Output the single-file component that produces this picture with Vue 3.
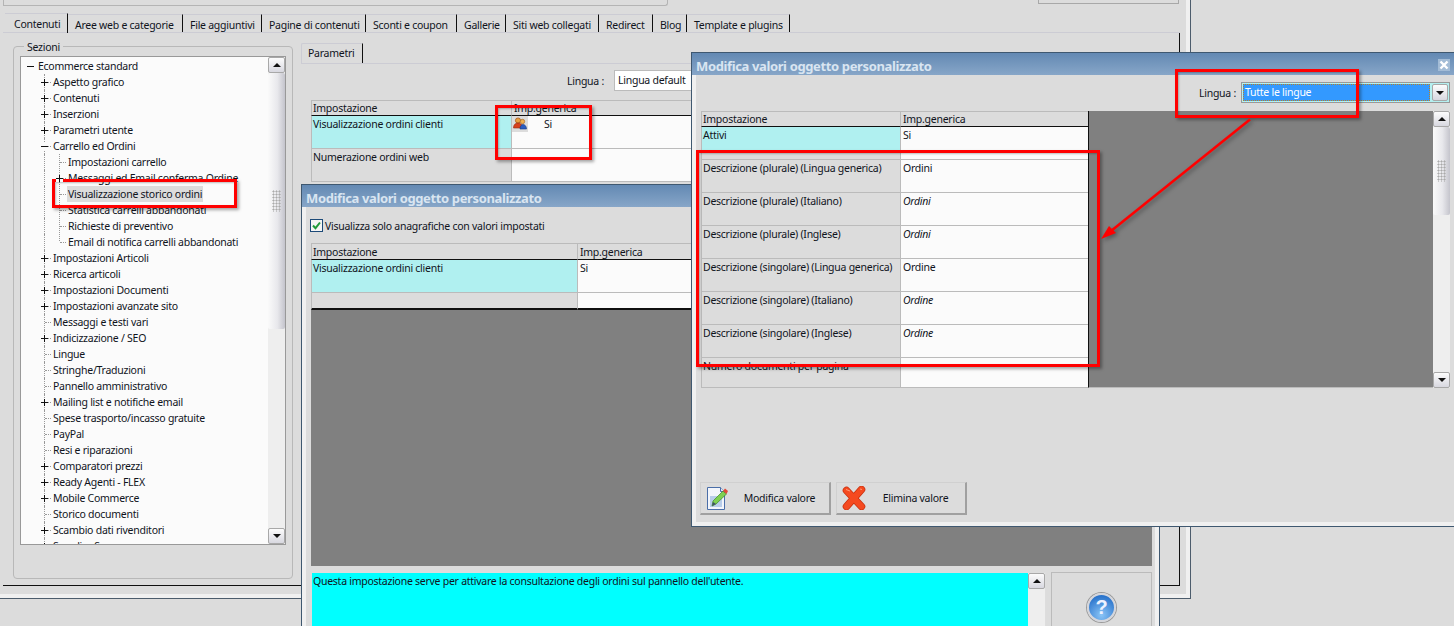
<script setup>
const tabs = [
  { t: 'Contenuti', w: 63, active: true },
  { t: 'Aree web e categorie', w: 115 },
  { t: 'File aggiuntivi', w: 79 },
  { t: 'Pagine di contenuti', w: 104 },
  { t: 'Sconti e coupon', w: 91 },
  { t: 'Gallerie', w: 49 },
  { t: 'Siti web collegati', w: 93 },
  { t: 'Redirect', w: 54 },
  { t: 'Blog', w: 34 },
  { t: 'Template e plugins', w: 103 }
]
const tree = [
  { t: 'Ecommerce standard', l: 0, e: 'm' },
  { t: 'Aspetto grafico', l: 1, e: 'p' },
  { t: 'Contenuti', l: 1, e: 'p' },
  { t: 'Inserzioni', l: 1, e: 'p' },
  { t: 'Parametri utente', l: 1, e: 'p' },
  { t: 'Carrello ed Ordini', l: 1, e: 'm' },
  { t: 'Impostazioni carrello', l: 2 },
  { t: 'Messaggi ed Email conferma Ordine', l: 2, e: 'p' },
  { t: 'Visualizzazione storico ordini', l: 2, sel: true },
  { t: 'Statistica carrelli abbandonati', l: 2 },
  { t: 'Richieste di preventivo', l: 2 },
  { t: 'Email di notifica carrelli abbandonati', l: 2, last: true },
  { t: 'Impostazioni Articoli', l: 1, e: 'p' },
  { t: 'Ricerca articoli', l: 1, e: 'p' },
  { t: 'Impostazioni Documenti', l: 1, e: 'p' },
  { t: 'Impostazioni avanzate sito', l: 1, e: 'p' },
  { t: 'Messaggi e testi vari', l: 1 },
  { t: 'Indicizzazione / SEO', l: 1, e: 'p' },
  { t: 'Lingue', l: 1 },
  { t: 'Stringhe/Traduzioni', l: 1 },
  { t: 'Pannello amministrativo', l: 1 },
  { t: 'Mailing list e notifiche email', l: 1, e: 'p' },
  { t: 'Spese trasporto/incasso gratuite', l: 1 },
  { t: 'PayPal', l: 1 },
  { t: 'Resi e riparazioni', l: 1 },
  { t: 'Comparatori prezzi', l: 1, e: 'p' },
  { t: 'Ready Agenti - FLEX', l: 1, e: 'p' },
  { t: 'Mobile Commerce', l: 1, e: 'p' },
  { t: 'Storico documenti', l: 1 },
  { t: 'Scambio dati rivenditori', l: 1, e: 'p' },
  { t: 'Supplier S', l: 1, e: 'p' }
]
const rows3 = [
  { a: 'Attivi', b: 'Si', on: true },
  { a: 'Descrizione (plurale) (Lingua generica)', b: 'Ordini' },
  { a: 'Descrizione (plurale) (Italiano)', b: 'Ordini', i: true },
  { a: 'Descrizione (plurale) (Inglese)', b: 'Ordini', i: true },
  { a: 'Descrizione (singolare) (Lingua generica)', b: 'Ordine' },
  { a: 'Descrizione (singolare) (Italiano)', b: 'Ordine', i: true },
  { a: 'Descrizione (singolare) (Inglese)', b: 'Ordine', i: true },
  { a: 'Numero documenti per pagina', b: '', short: true }
]
</script>

<template>
  <div class="desk">
    <div class="main">
      <div class="topbar">
        <div class="topfield"></div>
        <div class="topbtn"></div>
      </div>
      <div class="tabs">
        <div v-for="t in tabs" :key="t.t" class="tab" :class="{ active: t.active }" :style="{ width: t.w + 'px' }">{{ t.t }}</div>
      </div>
      <div class="tabbody">
        <div class="content">
          <fieldset class="group">
            <legend>Sezioni</legend>
            <div class="tree">
              <div class="treelist">
                <div v-for="r in tree" :key="r.t" class="node" :class="['lv' + r.l, { last: r.last }]">
                  <i v-if="r.e" class="exp" :class="r.e"></i>
                  <span class="label" :class="{ sel: r.sel }">{{ r.t }}</span>
                </div>
              </div>
              <div class="sb">
                <div class="sbtn"><b class="up"></b></div>
                <div class="thumb"><span class="grip"></span></div>
                <div class="track"></div>
                <div class="sbtn"><b class="down"></b></div>
              </div>
            </div>
          </fieldset>
          <div class="right">
            <div class="subtabs"><div class="subtab">Parametri</div></div>
            <div class="langrow">
              <span>Lingua :</span>
              <div class="combo">Lingua default</div>
            </div>
            <div class="table t1">
              <div class="hd">Impostazione</div><div class="hd">Imp.generica</div>
              <div class="c1 on">Visualizzazione ordini clienti</div>
              <div class="c2 si">
                <span class="usercell">
                  <svg width="16" height="16" viewBox="0 0 16 16">
                    <circle cx="6" cy="4.5" r="2.6" fill="#e8a040" stroke="#a04a10" stroke-width=".7"/>
                    <path d="M1.500 12c0-3.500 2-5 4.500-5s4.500 1.500 4.500 5z" fill="#d8401c" stroke="#902a10" stroke-width=".6"/>
                    <circle cx="10.500" cy="5.500" r="2.200" fill="#f0b050" stroke="#a06018" stroke-width=".6"/>
                    <path d="M8 13c0-3 1.300-4.500 3-4.500s3.500 1.500 3.500 4.500z" fill="#2a5cc0" stroke="#1a3a80" stroke-width=".6"/>
                  </svg>
                </span>
                <span>Si</span>
              </div>
              <div class="c1">Numerazione ordini web</div>
              <div class="c2"></div>
            </div>
          </div>
        </div>
      </div>
    </div>

    <div class="win win2">
      <div class="title">Modifica valori oggetto personalizzato</div>
      <div class="winbody">
        <label class="check">
          <svg width="13" height="13" viewBox="0 0 13 13">
            <rect x=".5" y=".5" width="12" height="12" fill="#f4f4f4" stroke="#1c4a78"/>
            <path d="M3 6.500l2.500 2.700L10 3.500" fill="none" stroke="#1f9a3a" stroke-width="2"/>
          </svg>
          <span>Visualizza solo anagrafiche con valori impostati</span>
        </label>
        <div class="table t2">
          <div class="hd">Impostazione</div><div class="hd">Imp.generica</div>
          <div class="c1 on">Visualizzazione ordini clienti</div>
          <div class="c2">Si</div>
          <div class="c1 empty"></div>
          <div class="c2 empty"></div>
        </div>
        <div class="grayarea"></div>
        <div class="helprow">
          <div class="memo">
            <div class="memotext">Questa impostazione serve per attivare la consultazione degli ordini sul pannello dell'utente.</div>
            <div class="sb memosb">
              <div class="sbtn"><b class="up"></b></div>
              <div class="track"></div>
            </div>
          </div>
          <div class="helpbox">
            <span class="help">?</span>
          </div>
        </div>
      </div>
    </div>

    <div class="win win3">
      <div class="title">
        <span>Modifica valori oggetto personalizzato</span>
        <span class="close">
          <svg width="10" height="10" viewBox="0 0 10 10"><path d="M1.500 1.500l7 7M8.500 1.500l-7 7" stroke="#fff" stroke-width="2.400"/></svg>
        </span>
      </div>
      <div class="winbody3">
        <div class="langrow3">
          <span>Lingua :</span>
          <div class="combo3">
            <div class="combosel"><span>Tutte le lingue</span></div>
            <div class="sbtn combobtn"><b class="down"></b></div>
          </div>
        </div>
        <div class="gridwrap">
          <div class="table t3">
            <div class="hd">Impostazione</div><div class="hd">Imp.generica</div>
            <template v-for="r in rows3" :key="r.a">
              <div class="c1" :class="{ on: r.on, short: r.short }">{{ r.a }}</div>
              <div class="c2" :class="{ ital: r.i, short: r.short }">{{ r.b }}</div>
            </template>
          </div>
          <div class="gridgray"></div>
          <div class="sb sb3">
            <div class="sbtn"><b class="up"></b></div>
            <div class="thumb thumb3"><span class="grip"></span></div>
            <div class="track"></div>
            <div class="sbtn"><b class="down"></b></div>
          </div>
        </div>
        <div class="buttons">
          <button class="btn">
            <svg width="24" height="24" viewBox="0 0 24 24">
              <path d="M1.500 1.500h13l4 4v18h-17z" fill="#f2f5fb" stroke="#4a6ea8"/>
              <path d="M14.500 1.500v4h4" fill="#dfe8f5" stroke="#4a6ea8"/>
              <rect x="4" y="10" width="12" height="11" fill="#b8cdea"/>
              <path d="M6 20l1-5L17 5l3.500 3L10 18z" fill="#7ed050" stroke="#3c8a20" stroke-width=".7"/>
              <path d="M17 5l2-2.500 3 2.500-1.500 3z" fill="#e04a3a"/>
              <path d="M6 20l1-4 3 2z" fill="#40506a"/>
            </svg>
            <span>Modifica valore</span>
          </button>
          <button class="btn">
            <svg width="24" height="24" viewBox="0 0 24 24">
              <path d="M4.500 4.500L19.500 20.500M19.500 3.500L4.500 20.500" stroke="#c8300e" stroke-width="7.500" stroke-linecap="round"/>
              <path d="M4.500 4.500L19.500 20.500M19.500 3.500L4.500 20.500" stroke="#f54a20" stroke-width="6" stroke-linecap="round"/>
              <path d="M4 3.500L8 5M18 3l2 .5" stroke="#ff9a78" stroke-width="1" fill="none"/>
            </svg>
            <span>Elimina valore</span>
          </button>
        </div>
      </div>
    </div>

    <div class="mark m1"></div>
    <div class="mark m2"></div>
    <div class="mark m3"></div>
    <div class="mark m4"></div>
    <svg class="arrow" width="1454" height="626" viewBox="0 0 1454 626">
      <line x1="1250" y1="119.500" x2="1111" y2="231" stroke="#f00" stroke-width="2.600"/>
      <path d="M1101 239l8-13 7 7z" fill="#f00"/>
    </svg>
  </div>
</template>

<style>
html, body { margin: 0; background: #dcdcdc; overflow: hidden; }
</style>

<style scoped>
.desk {
  position: relative;
  width: 1454px;
  height: 626px;
  overflow: hidden;
  background: #dcdcdc;
  font-family: "Noto Sans", "Liberation Sans", sans-serif;
  font-size: 10.5px;
  letter-spacing: -0.26px;
  line-height: 16px;
  color: #10141c;
}
.main {
  width: 1191px;
  height: 599px;
  box-sizing: border-box;
  border-right: 1px solid #4c5c6c;
  border-bottom: 1px solid #4c5c6c;
  box-shadow: inset -4px -4px 0 #f0f0f0;
  padding: 0 11px 0 3px;
}
.topbar { height: 13px; display: flex; justify-content: space-between; }
.topfield { width: 665px; height: 6px; box-sizing: border-box; border: 1px solid #b4b4b4; border-top: 0; border-radius: 0 0 3px 0; }
.topbtn { width: 141px; height: 4px; box-sizing: border-box; border: 1px solid #a8a8a8; border-top: 0; }
.tabs { display: flex; height: 20px; padding-left: 2px; box-sizing: border-box; border-bottom: 1px solid #ccccd4; width: 1177px; }
.tab {
  height: 18px;
  margin-top: 1px;
  box-sizing: border-box;
  flex: none;
  padding-left: 7px;
  border-top: 1px solid #ccccd4;
  border-right: 1px solid #101010;
  white-space: nowrap;
  line-height: 20px;
}
.tab.active { height: 20px; margin-top: 0; padding-left: 9px; }
.tabbody {
  width: 1177px;
  height: 553px;
  box-sizing: border-box;
  border-right: 1px solid #101010;
  border-bottom: 1px solid #101010;
  padding-right: 11px;
}
.content { display: flex; height: 546px; box-sizing: border-box; padding-left: 10px; padding-top: 8px; }
.group {
  width: 280px;
  height: 538px;
  box-sizing: border-box;
  margin: 0 8px 0 0;
  padding: 0 6px;
  border: 1px solid #b8b8b8;
  border-radius: 4px;
  flex: none;
}
legend { padding: 0 3px; margin-left: 4px; line-height: 12px; height: 10px; }
.tree {
  height: 489px;
  box-sizing: border-box;
  margin-top: 5px;
  background: #fbfbfb;
  border: 1px solid #999;
  display: flex;
  overflow: hidden;
}
.treelist { flex: 1; overflow: hidden; padding-top: 1px; }
.node { position: relative; height: 16px; white-space: nowrap; box-sizing: border-box; }
.node.lv0 { padding-left: 16px; }
.node.lv1 { padding-left: 31px; }
.node.lv2 {
  padding-left: 46px;
  background: repeating-linear-gradient(#999 0 1px, transparent 1px 2px) 38px 0 / 1px 100% no-repeat;
}
.node.lv2.last { background-size: 1px 8px; }
.node.lv1::before, .node.lv2::before {
  content: "";
  position: absolute;
  left: 23px;
  top: 0;
  bottom: 0;
  border-left: 1px dotted #999;
}
.node.lv1::after {
  content: "";
  position: absolute;
  left: 24px;
  top: 8px;
  width: 6px;
  border-top: 1px dotted #999;
}
.node.lv2::after {
  content: "";
  position: absolute;
  left: 39px;
  top: 8px;
  width: 6px;
  border-top: 1px dotted #999;
}
.exp { position: absolute; width: 7px; height: 7px; top: 5px; background: linear-gradient(#111, #111) center / 7px 1px no-repeat, #fbfbfb; z-index: 1; }
.exp.p { background: linear-gradient(#111, #111) center / 7px 1px no-repeat, linear-gradient(#111, #111) center / 1px 7px no-repeat, #fbfbfb; }
.lv0 .exp { left: 6px; }
.lv1 .exp { left: 20px; }
.lv2 .exp { left: 35px; }
.label { display: inline-block; padding: 0 1px; }
.label.sel { background: #dcdcdc; }

.sb { width: 17px; flex: none; display: flex; flex-direction: column; background: #eeeeee; }
.sbtn {
  height: 16px;
  flex: none;
  box-sizing: border-box;
  border: 1px solid #a8a8a8;
  border-radius: 2px;
  background: linear-gradient(#fcfcfc, #d8d8e0);
  display: flex;
  align-items: center;
  justify-content: center;
}
.up { width: 0; height: 0; border: 4px solid transparent; border-top: 0; border-bottom: 4px solid #111; }
.down { width: 0; height: 0; border: 4px solid transparent; border-bottom: 0; border-top: 4px solid #111; }
.thumb {
  height: 256px;
  flex: none;
  background: linear-gradient(90deg, #fafafa, #e8e8ec 55%, #c4c4cc);
  border-radius: 2px;
  display: flex;
  align-items: center;
  justify-content: center;
}
.track { flex: 1; }
.grip {
  width: 9px;
  height: 22px;
  background-image: radial-gradient(#aaa 45%, transparent 50%);
  background-size: 3px 3px;
}

.right { flex: 1; padding-top: 2px; }
.subtabs { height: 20px; border-bottom: 1px solid #ccccd4; }
.subtab {
  width: 62px;
  height: 20px;
  box-sizing: border-box;
  padding-left: 6px;
  border-top: 1px solid #ccccd4;
  border-left: 1px solid #ccccd4;
  border-right: 1px solid #101010;
  border-radius: 2px 0 0 0;
  line-height: 18px;
}
.langrow { display: flex; align-items: center; gap: 10px; height: 21px; margin-top: 6px; padding-left: 266px; }
.combo { width: 200px; height: 21px; box-sizing: border-box; background: #fff; border: 1px solid #bbb; padding-left: 3px; line-height: 19px; }

.table { display: grid; background: #dcdcdc; }
.hd { height: 16px; box-sizing: border-box; padding-left: 1px; line-height: 15px; border-bottom: 1px solid #101010; border-left: 1px solid #bbb; border-top: 1px solid #bbb; }
.hd + .hd { padding-left: 2px; }
.c1 { height: 33px; box-sizing: border-box; padding: 0 0 0 1px; border-bottom: 1px solid #bbb; border-left: 1px solid #bbb; white-space: nowrap; overflow: hidden; }
.c2 { height: 33px; box-sizing: border-box; padding: 0 0 0 2px; background: #fbfbfb; border-bottom: 1px solid #bbb; border-left: 1px solid #bbb; }
.c1.on { background: #b0f0f0; }
.t3 .c1.on { background: linear-gradient(#b0f0f0 25px, #dcdcdc 25px); }
.t1 { grid-template-columns: 200px 260px; margin: 9px 0 0 10px; width: 460px; }
.si { display: flex; padding: 0; }
.usercell { width: 16px; height: 16px; background: #dcdcdc; margin-right: 16px; }

.win { position: absolute; box-sizing: border-box; background: #dcdcdc; border: 1px solid #3f5870; box-shadow: inset 0 0 0 4px #f0f0f0; }
.title {
  height: 22px;
  padding-left: 4px;
  background: linear-gradient(#6389b3, #87a6c8);
  color: #d9e5f1;
  font-weight: 700;
  font-size: 13px;
  letter-spacing: -0.37px;
  line-height: 27px;
  white-space: nowrap;
  overflow: hidden;
  display: flex;
  justify-content: space-between;
}
.win2 { left: 301px; top: 184px; width: 859px; height: 480px; }
.winbody { padding: 12px 7px 0 8px; }
.check { display: flex; align-items: center; gap: 2px; height: 13px; }
.t2 { grid-template-columns: 266px 600px; margin-top: 11px; margin-left: 1px; }
.t2 .hd { height: 17px; padding-top: 1px; }
.t2 .empty { height: 17px; border-bottom: 2px solid #101010; }
.grayarea { height: 256px; margin-left: 1px; background: #808080; }
.helprow { display: flex; margin-top: 6px; gap: 5px; margin-left: 1px; }
.memo { width: 735px; height: 70px; display: flex; background: #00ffff; border: 1px solid #ddd; box-sizing: border-box; flex: none; }
.memotext { flex: 1; padding: 0 1px; }
.memosb { height: 100%; }
.helpbox { width: 101px; height: 70px; box-sizing: border-box; border: 1px solid #bbb; display: flex; justify-content: center; padding-top: 20px; }
.help {
  width: 25px;
  height: 25px;
  border-radius: 50%;
  border: 2px solid #d4d6dc;
  background: radial-gradient(circle at 50% 80%, #8ac4f6, #2a74cc 80%);
  color: #eef2ff;
  font-family: "Liberation Sans", sans-serif;
  font-weight: 700;
  font-size: 20px;
  line-height: 25px;
  text-align: center;
  box-shadow: 0 0 0 1px #9a9a9a;
}

.win3 { left: 691px; top: 52px; width: 800px; height: 475px; }
.win3 .title { padding-right: 42px; }
.close { width: 12px; height: 12px; margin-top: 6px; display: flex; align-items: center; justify-content: center; background: #a3bcd6; margin-right: -2px; }
.winbody3 { padding: 7px 0 0 9px; }
.langrow3 { display: flex; gap: 5px; align-items: center; height: 21px; padding-left: 498px; }
.combo3 { display: flex; width: 209px; height: 21px; box-sizing: border-box; border: 1px solid #999; background: #b4f0f0; padding: 1px; gap: 2px; }
.combosel { flex: 1; background: #3399ff; color: #fff; outline: 1px dotted #c08020; outline-offset: -1px; padding-left: 2px; line-height: 16px; }
.combobtn { width: 16px; height: 17px; }
.gridwrap { display: flex; margin-top: 8px; height: 277px; width: 750px; }
.t3 { grid-template-columns: 199px 188px; grid-template-rows: 16px repeat(7, 33px) 30px; flex: none; }
.t3 .short { height: 30px; }
.gridgray { width: 345px; flex: none; background: #808080; border-left: 1px solid #101010; box-sizing: border-box; border-bottom: 1px solid #bbb; }
.ital { font-style: italic; }
.sb3 { height: 277px; }
.thumb3 { height: 88px; }
.buttons { display: flex; gap: 5px; margin: 94px 0 0 -1px; }
.btn {
  width: 131px;
  height: 33px;
  font: inherit;
  letter-spacing: inherit;
  color: inherit;
  box-sizing: border-box;
  background: #dcdcdc;
  border-style: solid;
  border-color: #d0d0d0 #a0a0a0 #a0a0a0 #d0d0d0;
  border-width: 1px 2px 2px 1px;
  padding: 0 0 0 5px;
  display: flex;
  align-items: center;
}
.btn span { flex: 1; text-align: center; }

.mark { position: absolute; box-sizing: border-box; border: 3px solid #f00; box-shadow: 2px 2px 3px rgba(0,0,0,.35), inset 1px 1px 2px rgba(0,0,0,.25); pointer-events: none; }
.m1 { left: 52px; top: 179px; width: 185px; height: 29px; }
.m2 { left: 495px; top: 105px; width: 97px; height: 55px; }
.m3 { left: 1175px; top: 69px; width: 184px; height: 49px; }
.m4 { left: 696px; top: 150px; width: 404px; height: 217px; }
.arrow { position: absolute; left: 0; top: 0; pointer-events: none; filter: drop-shadow(2px 2px 2px rgba(0,0,0,.35)); }
</style>
